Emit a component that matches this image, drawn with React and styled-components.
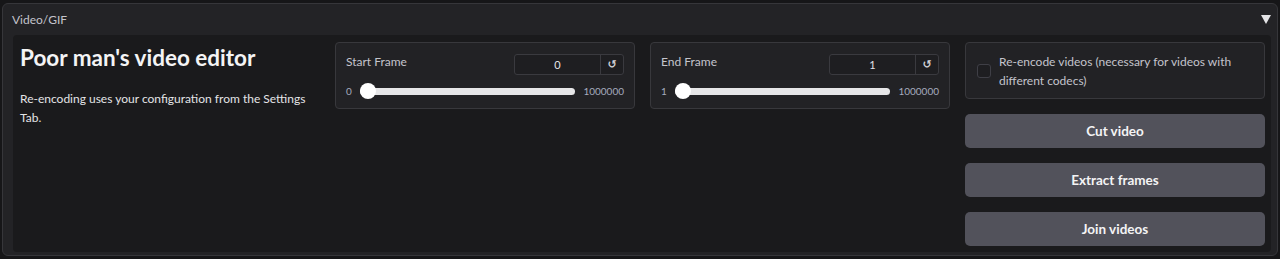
import React, { useState } from 'react'
import styled, { createGlobalStyle } from 'styled-components'

/* Styles Begin */

const GlobalStyle = createGlobalStyle`
  html, body {
    margin: 0;
    background: #161618;
    font-family: Lato, "Noto Sans", sans-serif;
    color: #e4e4e7;
  }
  * { box-sizing: border-box; }
`

const Accordion = styled.div`
  margin: 3px 2px;
  height: 253px;
  border: 1px solid #36363a;
  border-radius: 6px;
  background: #232326;
  padding: 0 6px 3px 10px;
  display: flex;
  flex-direction: column;
`

const AccordionHeader = styled.div`
  height: 33px;
  display: flex;
  align-items: center;
  justify-content: space-between;
  margin-left: -1px;
  font-size: 12px;
  color: #c4c4cc;
  cursor: pointer;
  user-select: none;
`

const Caret = styled.span`
  width: 0;
  height: 0;
  border-left: 5px solid transparent;
  border-right: 5px solid transparent;
  border-top: 9px solid #e4e4e7;
  transform: ${({ open }) => !open && 'rotate(90deg)'};
`

const Panel = styled.div`
  flex: 1;
  background: #1a1a1c;
  border-radius: 4px;
  padding: 7px 6px 6px 7px;
  display: grid;
  grid-template-columns: repeat(4, 1fr);
  column-gap: 15px;
  align-items: start;
`

const Intro = styled.div`
  display: flex;
  flex-direction: column;
`

const Title = styled.h2`
  margin: 0;
  font-size: 22.5px;
  line-height: 32px;
  font-weight: 700;
  color: #f4f4f5;
`

const Paragraph = styled.p`
  margin: 15px 0 0;
  font-size: 12px;
  line-height: 19px;
  color: #e4e4e7;
`

const Block = styled.div`
  background: #222225;
  border: 1px solid #38383c;
  border-radius: 4px;
  padding: 11px 10px 9px;
`

const SliderHead = styled.div`
  display: flex;
  align-items: center;
  justify-content: space-between;
`

const Label = styled.span`
  font-size: 12px;
  color: #c4c4cc;
  margin-top: -7px;
`

const NumberBox = styled.div`
  display: flex;
  height: 21px;
  border: 1px solid #3a3a3f;
  border-radius: 3px;
  background: #1e1e21;
  overflow: hidden;
`

const NumberValue = styled.span`
  width: 85px;
  display: flex;
  align-items: center;
  justify-content: center;
  font-size: 11px;
  color: #e4e4e7;
`

const ResetButton = styled.button`
  width: 23px;
  border: none;
  border-left: 1px solid #3a3a3f;
  background: transparent;
  color: #d4d4d8;
  font-family: "DejaVu Sans", sans-serif;
  font-size: 11px;
  font-weight: 700;
  padding: 0;
  cursor: pointer;
`

const SliderRow = styled.div`
  display: flex;
  align-items: center;
  margin-top: 8px;
  height: 16px;
`

const RangeLabel = styled.span`
  font-size: 10px;
  color: #a5abbe;
  min-width: ${({ wide }) => (wide ? '41px' : '8px')};
  text-align: ${({ wide }) => (wide ? 'right' : 'left')};
`

const Track = styled.div`
  flex: 1;
  height: 7px;
  margin: 0 8px 0 6px;
  border-radius: 4px;
  background: #e6e6e8;
  position: relative;
`

const Thumb = styled.span`
  position: absolute;
  top: 50%;
  width: 16px;
  height: 16px;
  border-radius: 50%;
  background: #ffffff;
  transform: translateY(-50%);
`

const Actions = styled.div`
  display: flex;
  flex-direction: column;
  gap: 15px;
`

const CheckBlock = styled.label`
  display: flex;
  align-items: center;
  gap: 8px;
  height: 57px;
  padding: 0 12px 0 11px;
  background: #222225;
  border: 1px solid #38383c;
  border-radius: 4px;
  cursor: pointer;
`

const CheckBox = styled.span`
  flex: none;
  width: 14px;
  height: 14px;
  border: 1px solid #3f3f46;
  border-radius: 3px;
  background: ${({ checked }) => (checked ? '#52525b' : '#1e1e21')};
`

const CheckText = styled.span`
  font-size: 12px;
  line-height: 19px;
  color: #c4c4cc;
`

const Button = styled.button`
  height: 34px;
  border: none;
  border-radius: 5px;
  background: #52525b;
  color: #f4f4f5;
  font-family: inherit;
  font-size: 13.5px;
  font-weight: 700;
  cursor: pointer;
`

/* Styles End */

const FrameSlider = ({ label, value, min, max }) => {
  const ratio = (value - min) / (max - min)
  return (
    <Block>
      <SliderHead>
        <Label>{label}</Label>
        <NumberBox>
          <NumberValue>{value}</NumberValue>
          <ResetButton>↺</ResetButton>
        </NumberBox>
      </SliderHead>
      <SliderRow>
        <RangeLabel>{min}</RangeLabel>
        <Track>
          {/* thumb stays inside the track, like a native range input */}
          <Thumb style={{ left: `calc((100% - 16px) * ${ratio})` }} />
        </Track>
        <RangeLabel wide>{max}</RangeLabel>
      </SliderRow>
    </Block>
  )
}

const App = () => {
  const [open, setOpen] = useState(true)
  const [reencode, setReencode] = useState(false)

  return (
    <>
      <GlobalStyle />
      <Accordion>
        <AccordionHeader onClick={() => setOpen(prev => !prev)}>
          <span>Video/GIF</span>
          <Caret open={open} />
        </AccordionHeader>
        {open && (
          <Panel>
            <Intro>
              <Title>Poor man's video editor</Title>
              <Paragraph>Re-encoding uses your configuration from the Settings Tab.</Paragraph>
            </Intro>
            <FrameSlider label="Start Frame" value={0} min={0} max={1000000} />
            <FrameSlider label="End Frame" value={1} min={1} max={1000000} />
            <Actions>
              <CheckBlock onClick={() => setReencode(prev => !prev)}>
                <CheckBox checked={reencode} />
                <CheckText>Re-encode videos (necessary for videos with different codecs)</CheckText>
              </CheckBlock>
              <Button>Cut video</Button>
              <Button>Extract frames</Button>
              <Button>Join videos</Button>
            </Actions>
          </Panel>
        )}
      </Accordion>
    </>
  )
}

export default App
